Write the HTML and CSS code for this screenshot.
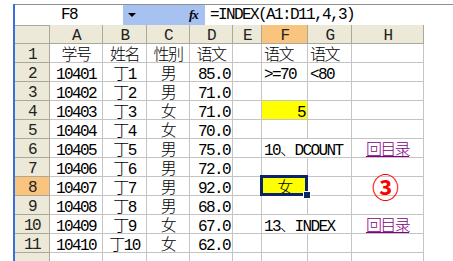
FILE: index.html
```html
<!DOCTYPE html>
<html lang="zh">
<head>
	<meta charset="UTF-8">
	<title>INDEX</title>
	<link rel="stylesheet" href="styles.css">
</head>
<body>
	<div class="win">
		<!-- 编辑栏 -->
		<div class="fbar">
			<div class="namebox">F8</div>
			<div class="fbtns">
				<span class="drop"></span>
				<span class="fx">fx</span>
			</div>
			<div class="formula">=INDEX(A1:D11,4,3)</div>
		</div>

		<!-- 工作表 -->
		<div class="sheet">
			<div class="c h"></div><div class="c h">A</div><div class="c h">B</div><div class="c h">C</div><div class="c h">D</div><div class="c h">E</div><div class="c h sel">F</div><div class="c h">G</div><div class="c h">H</div><div class="fill"></div>

			<div class="c h">1</div><div class="c ctr">学号</div><div class="c ctr">姓名</div><div class="c ctr">性别</div><div class="c ctr">语文</div><div class="c"></div><div class="c">语文</div><div class="c">语文</div><div class="c"></div><div class="fill"></div>

			<div class="c h">2</div><div class="c ctr">10401</div><div class="c ctr">丁1</div><div class="c ctr">男</div><div class="c rt">85.0</div><div class="c"></div><div class="c">&gt;=70</div><div class="c">&lt;80</div><div class="c"></div><div class="fill"></div>

			<div class="c h">3</div><div class="c ctr">10402</div><div class="c ctr">丁2</div><div class="c ctr">男</div><div class="c rt">71.0</div><div class="c"></div><div class="c"></div><div class="c"></div><div class="c"></div><div class="fill"></div>

			<div class="c h">4</div><div class="c ctr">10403</div><div class="c ctr">丁3</div><div class="c ctr">女</div><div class="c rt">71.0</div><div class="c"></div><div class="c rt yellow">5</div><div class="c"></div><div class="c"></div><div class="fill"></div>

			<div class="c h">5</div><div class="c ctr">10404</div><div class="c ctr">丁4</div><div class="c ctr">女</div><div class="c rt">70.0</div><div class="c"></div><div class="c"></div><div class="c"></div><div class="c"></div><div class="fill"></div>

			<div class="c h">6</div><div class="c ctr">10405</div><div class="c ctr">丁5</div><div class="c ctr">男</div><div class="c rt">75.0</div><div class="c"></div><div class="c span2">10、DCOUNT</div><div class="c ctr"><a href="">回目录</a></div><div class="fill"></div>

			<div class="c h">7</div><div class="c ctr">10406</div><div class="c ctr">丁6</div><div class="c ctr">男</div><div class="c rt">72.0</div><div class="c"></div><div class="c"></div><div class="c"></div><div class="c"></div><div class="fill"></div>

			<div class="c h sel">8</div><div class="c ctr">10407</div><div class="c ctr">丁7</div><div class="c ctr">男</div><div class="c rt">92.0</div><div class="c"></div><div class="c ctr yellow active">女</div><div class="c"></div><div class="c ctr mark">③</div><div class="fill"></div>

			<div class="c h">9</div><div class="c ctr">10408</div><div class="c ctr">丁8</div><div class="c ctr">男</div><div class="c rt">68.0</div><div class="c"></div><div class="c"></div><div class="c"></div><div class="c"></div><div class="fill"></div>

			<div class="c h">10</div><div class="c ctr">10409</div><div class="c ctr">丁9</div><div class="c ctr">女</div><div class="c rt">67.0</div><div class="c"></div><div class="c span2">13、INDEX</div><div class="c ctr"><a href="">回目录</a></div><div class="fill"></div>

			<div class="c h">11</div><div class="c ctr">10410</div><div class="c ctr">丁10</div><div class="c ctr">女</div><div class="c rt">62.0</div><div class="c"></div><div class="c"></div><div class="c"></div><div class="c"></div><div class="fill"></div>

			<div class="c h"></div><div class="c"></div><div class="c"></div><div class="c"></div><div class="c"></div><div class="c"></div><div class="c"></div><div class="c"></div><div class="c"></div><div class="fill"></div>
		</div>
	</div>
</body>
</html>
```

FILE: styles.css
```css
*{
	margin: 0;
	padding: 0;
	box-sizing: border-box;
}
body{
	background: #fff;
	font-family: "Liberation Mono", "Noto Sans CJK SC", monospace;
	font-size: 16px;
	font-weight: 300;
	letter-spacing: -1.6px;
	line-height: 16px;
	color: #000;
	overflow: hidden;
}
.win{
	margin: 4px 0 0 13px;
	border-left: 2px solid #3b6fd9;
	height: 257px;
	overflow: hidden;
}

/* 编辑栏 */
.fbar{
	display: flex;
	height: 21px;
	border-top: 1px solid #8f8f8f;
}
.namebox{
	width: 108px;
	display: flex;
	align-items: center;
	justify-content: center;
}
.fbtns{
	width: 82px;
	background: #a7c1f0;
	display: flex;
	align-items: center;
}
.drop{
	width: 0;
	height: 0;
	margin-left: 5px;
	border-left: 4px solid transparent;
	border-right: 4px solid transparent;
	border-top: 4px solid #000;
}
.fx{
	margin-left: 53px;
	font-family: "Liberation Serif", serif;
	font-style: italic;
	font-weight: bold;
	font-size: 13px;
	letter-spacing: -1px;
}
.formula{
	flex: 1;
	padding-left: 5px;
	display: flex;
	align-items: center;
	white-space: nowrap;
}

/* 工作表 */
.sheet{
	display: grid;
	grid-template-columns: 35px 53px 44px 43px 43px 29px 46px 44px 72px 1fr;
	grid-auto-rows: 19px;
}
.c{
	border-right: 1px solid #c4c4c4;
	border-bottom: 1px solid #c4c4c4;
	display: flex;
	align-items: flex-start;
	padding: 4px 2px 0;
	white-space: nowrap;
}
.h{
	background: #ece9d8;
	border-right-color: #aca899;
	border-bottom-color: #aca899;
	justify-content: center;
	color: #222;
	padding-top: 3px;
}
.sheet > .h:first-child{
	border-top: 1px solid #aca899;
}
.h.sel{
	background: #f9c47e;
}
.ctr{
	justify-content: center;
}
.rt{
	justify-content: flex-end;
}
.span2{
	grid-column: span 2;
}
.yellow{
	background: #ffff00;
}
.active{
	position: relative;
}
.active::before{
	content: "";
	position: absolute;
	left: -2px;
	top: -2px;
	right: -1px;
	bottom: -1px;
	border: 3px solid #0a246a;
}
.active::after{
	content: "";
	position: absolute;
	right: -4px;
	bottom: -4px;
	width: 6px;
	height: 6px;
	background: #0a246a;
	border: 1px solid #fff;
}
.mark{
	color: #f00;
	font-family: "Noto Sans CJK SC", sans-serif;
	font-weight: bold;
	font-size: 27px;
	line-height: 19px;
	letter-spacing: 0;
	align-items: center;
	padding: 0 4px 0 0;
	overflow: visible;
}
a{
	color: #800080;
	text-decoration: underline;
}
.fill{
	background: #fff;
}
```
